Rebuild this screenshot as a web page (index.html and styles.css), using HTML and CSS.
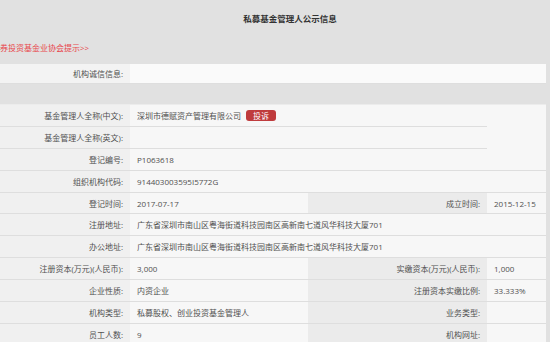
FILE: index.html
```html
<!DOCTYPE html>
<html lang="zh-CN">
<head>
    <meta charset="UTF-8">
    <meta name="viewport" content="width=device-width, initial-scale=1.0">
    <title>私募基金管理人公示信息</title>
    <link rel="stylesheet" href="styles.css">
</head>
<body>

    <!-- 标题 -->
    <h1 class="page-title">私募基金管理人公示信息</h1>

    <!-- 协会提示 -->
    <a class="notice" href="#">券投资基金业协会提示&gt;&gt;</a>

    <!-- 公示信息表格 -->
    <table class="info-table">
        <colgroup>
            <col class="c1">
            <col class="c2">
            <col class="c3">
            <col class="c4">
        </colgroup>
        <tbody>
            <tr class="first">
                <td class="label">机构诚信信息:</td>
                <td colspan="3"></td>
            </tr>
            <tr class="gap">
                <td colspan="4"></td>
            </tr>
            <tr>
                <td class="label">基金管理人全称(中文):</td>
                <td colspan="2">深圳市德赋资产管理有限公司 <span class="complain">投诉</span></td>
                <td rowspan="3" class="side"></td>
            </tr>
            <tr>
                <td class="label">基金管理人全称(英文):</td>
                <td colspan="2"></td>
            </tr>
            <tr>
                <td class="label">登记编号:</td>
                <td colspan="2">P1063618</td>
            </tr>
            <tr>
                <td class="label">组织机构代码:</td>
                <td colspan="3">914403003595I5772G</td>
            </tr>
            <tr>
                <td class="label">登记时间:</td>
                <td>2017-07-17</td>
                <td class="label alt">成立时间:</td>
                <td>2015-12-15</td>
            </tr>
            <tr>
                <td class="label">注册地址:</td>
                <td colspan="3">广东省深圳市南山区粤海街道科技园南区高新南七道风华科技大厦701</td>
            </tr>
            <tr>
                <td class="label">办公地址:</td>
                <td colspan="3">广东省深圳市南山区粤海街道科技园南区高新南七道风华科技大厦701</td>
            </tr>
            <tr>
                <td class="label">注册资本(万元)(人民币):</td>
                <td>3,000</td>
                <td class="label alt">实缴资本(万元)(人民币):</td>
                <td>1,000</td>
            </tr>
            <tr>
                <td class="label">企业性质:</td>
                <td>内资企业</td>
                <td class="label alt">注册资本实缴比例:</td>
                <td>33.333%</td>
            </tr>
            <tr>
                <td class="label">机构类型:</td>
                <td>私募股权、创业投资基金管理人</td>
                <td class="label alt">业务类型:</td>
                <td></td>
            </tr>
            <tr>
                <td class="label">员工人数:</td>
                <td>9</td>
                <td class="label alt">机构网址:</td>
                <td></td>
            </tr>
        </tbody>
    </table>

</body>
</html>
```

FILE: styles.css
```css
body {
    margin: 0;
    padding: 0;
    background-color: #e1e1e1;
    font-family: "Open Sans", "Noto Sans CJK SC", sans-serif;
    font-size: 8px;
    color: #505050;
    overflow: hidden;
}
.page-title {
    margin: 0;
    padding: 13px 0 0 30px;
    height: 26px;
    text-align: center;
    font-size: 8.5px;
    font-weight: bold;
    color: #333;
    line-height: 12px;
}
.notice {
    display: block;
    padding-top: 2px;
    height: 23px;
    line-height: 14px;
    color: #e8474c;
    text-decoration: none;
    white-space: nowrap;
}
.info-table {
    width: 546px;
    border-collapse: collapse;
    table-layout: fixed;
}
.info-table .c1 { width: 130px; }
.info-table .c2 { width: 178px; }
.info-table .c3 { width: 179px; }
.info-table .c4 { width: 59px; }
.info-table td {
    height: 20.9px;
    padding: 0 7px;
    background-color: #f7f7f7;
    border-bottom: 1px solid #dedede;
    white-space: nowrap;
    overflow: hidden;
}
.info-table td.label {
    text-align: right;
    background-color: #f0f0f0;
}
.info-table td.alt {
    background-color: #ebebeb;
}
.info-table tr.first td {
    height: 19px;
    background-color: #fafafa;
}
.info-table tr.first td.label {
    background-color: #f3f3f3;
}
.info-table tr.gap td {
    height: 20px;
    background-color: #e1e1e1;
    border-bottom: 1px solid #ececec;
}
.complain {
    display: inline-block;
    margin-left: 3px;
    padding: 0 7px;
    line-height: 11px;
    border-radius: 3px;
    background-color: #bf3b3d;
    color: #fff;
}
```
